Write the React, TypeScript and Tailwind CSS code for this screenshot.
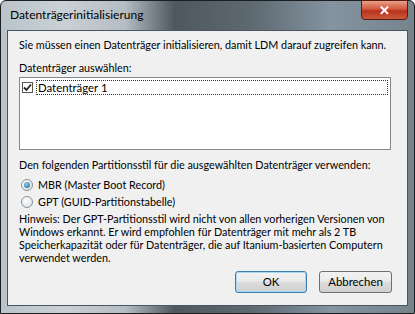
import React from 'react';

const font = { fontFamily: 'Lato, "Noto Sans", sans-serif' };

function Check() {
    return (
        <div className='w-[11px] h-[11px] border border-[#555] bg-white flex items-center justify-center shrink-0'>
            <svg width='9' height='9' viewBox='0 0 9 9'>
                <path d='M1 4.5 L3.5 7 L8 1.5' stroke='#222' strokeWidth='1.8' fill='none' />
            </svg>
        </div>
    );
}

function Radio({ on }: { on: boolean }) {
    return (
        <div className='w-[12px] h-[12px] rounded-full border border-[#8a9299] bg-[radial-gradient(circle_at_40%_35%,#ffffff,#d6dade)] flex items-center justify-center shrink-0'>
            {on && <div className='w-[6px] h-[6px] rounded-full bg-[radial-gradient(circle_at_40%_35%,#8fd0f0,#1a5a8a)]' />}
        </div>
    );
}

export default function App() {
    return (
        <div className='w-[415px] h-[314px] bg-white'>
            <div className='w-[415px] h-[314px] rounded-t-[6px] border border-[#1c1f22] bg-[linear-gradient(90deg,#b9c3ca_0%,#c9d1d6_15%,#b4bdc3_30%,#4f5860_42%,#5d6870_60%,#8494a0_80%,#75838c_100%)] flex flex-col' style={font}>
                <div className='h-[29px] flex items-center pl-[9px] relative shrink-0'>
                    <span className='text-[12px] text-black -mt-[2px]'>Datenträgerinitialisierung</span>
                    <div className='absolute right-[6px] top-[-1px] w-[47px] h-[20px] rounded-b-[4px] border border-[#5a1a10] bg-[linear-gradient(180deg,#e8a08a_0%,#d2573c_45%,#b8321c_55%,#c85a3a_100%)] flex items-center justify-center'>
                        <span className='text-white text-[13px] font-bold leading-none'>✕</span>
                    </div>
                </div>
                <div className='flex-1 mx-[6px] mb-[7px] border border-[#4b5560] bg-[#f0f0f0] px-[11px] pt-[7px] text-[10.8px] text-black leading-[14px] flex flex-col'>
                    <p className='whitespace-nowrap'>Sie müssen einen Datenträger initialisieren, damit LDM darauf zugreifen kann.</p>
                    <p className='mt-[9px] whitespace-nowrap'>Datenträger auswählen:</p>
                    <div className='h-[73px] border border-[#828790] bg-white p-[2px] mt-[2px] mr-[5px]'>
                        <div className='flex items-center gap-[3px]'>
                            <Check />
                            <div className='flex-1 border border-dotted border-[#333] h-[15px] flex items-center pl-[1px] leading-none text-[11.4px]'>Datenträger 1</div>
                        </div>
                    </div>
                    <p className='mt-[8px] whitespace-nowrap'>Den folgenden Partitionsstil für die ausgewählten Datenträger verwenden:</p>
                    <div className='flex items-center gap-[5px] mt-[6px] pl-[2px]'>
                        <Radio on />
                        <span>MBR (Master Boot Record)</span>
                    </div>
                    <div className='flex items-center gap-[5px] mt-[3px] pl-[2px]'>
                        <Radio on={false} />
                        <span>GPT (GUID-Partitionstabelle)</span>
                    </div>
                    <p className='mt-[3px] leading-[13px] whitespace-nowrap'>
                        Hinweis: Der GPT-Partitionsstil wird nicht von allen vorherigen Versionen von<br />
                        Windows erkannt. Er wird empfohlen für Datenträger mit mehr als 2 TB<br />
                        Speicherkapazität oder für Datenträger, die auf Itanium-basierten Computern<br />
                        verwendet werden.
                    </p>
                    <div className='flex justify-end gap-[12px] mt-[7px] mr-[4px]'>
                        <button className='w-[72px] h-[22px] rounded-[3px] border border-[#3c7fb1] bg-[linear-gradient(180deg,#f2f2f2_0%,#ebebeb_45%,#dddddd_50%,#cfcfcf_100%)] shadow-[inset_0_0_0_1px_#a8d8f0] text-[11.4px]'>OK</button>
                        <button className='w-[73px] h-[22px] rounded-[3px] border border-[#707070] bg-[linear-gradient(180deg,#f2f2f2_0%,#ebebeb_45%,#dddddd_50%,#cfcfcf_100%)] text-[11.4px]'>Abbrechen</button>
                    </div>
                </div>
            </div>
        </div>
    );
}
